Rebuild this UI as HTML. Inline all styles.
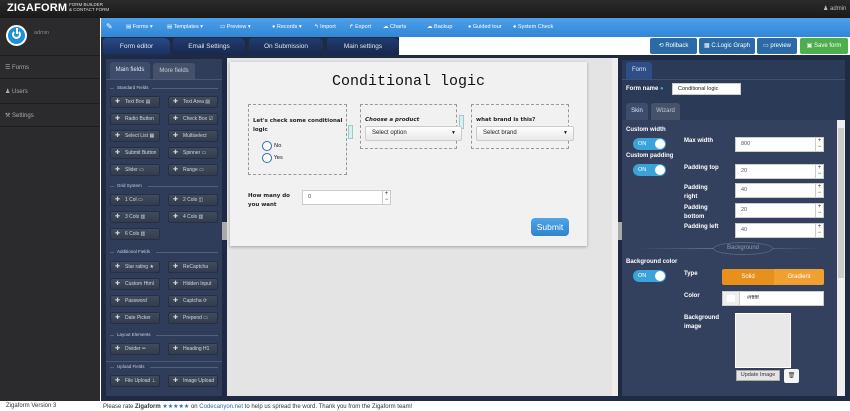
<!DOCTYPE html>
<html><head><meta charset="utf-8"><style>
*{box-sizing:border-box;margin:0;padding:0}
body{width:850px;height:411px;overflow:hidden;font-family:"Liberation Sans",sans-serif;font-size:6px;background:#fff;position:relative}
.a{position:absolute}
.top{left:0;top:0;width:850px;height:18px;background:linear-gradient(#2a2a2a,#1a1a1a)}
.side{left:0;top:18px;width:100px;height:383px;background:#2b2a2c}
.tb{left:101px;top:18px;width:749px;height:19px;background:linear-gradient(#4da0ea,#3187d6)}
.tb span{position:absolute;top:6px;color:#fff;font-size:5.5px}
.tabs{left:101px;top:37px;width:749px;height:18px;background:#fff}
.tab{position:absolute;top:1px;height:17px;background:linear-gradient(#2a4a86,#1a2f5e);color:#dfe6f2;font-size:6.5px;text-align:center;line-height:17px;border-radius:3px 6px 0 0}
.btn{position:absolute;top:38px;height:16px;color:#fff;font-size:6px;line-height:16px;text-align:center;border-radius:2px}
.main{left:101px;top:55px;width:749px;height:346px;background:#1f2a44}
.lp{left:106px;top:59px;width:116px;height:337px;background:#2f3d5a}
.fb{position:absolute;width:50px;height:12px;background:linear-gradient(#404b5e,#323c4e);border:1px solid #263042;border-radius:2px;color:#cfd6e2;font-size:5px;line-height:10px;padding-left:14px}
.fb:before{content:"✚";position:absolute;left:4px;top:0;color:#cfd6e2;font-size:6px}
.lbl{position:absolute;left:117px;color:#c8d0dd;font-size:4.5px}
.hr{position:absolute;height:1px;background:#52607a}
.cv{left:227px;top:58px;width:391px;height:338px;background:#e4e4e4}
.card{left:230px;top:62px;width:357px;height:184px;background:#f1f1f1;box-shadow:0 1px 3px rgba(0,0,0,.3)}
.dash{position:absolute;border:1px dashed #999}
.cf{font-family:"DejaVu Sans",sans-serif;font-size:5.5px;font-weight:bold;color:#222}
.sel{position:absolute;height:15px;background:linear-gradient(#fff,#e8e8e8);border:1px solid #ccc;border-radius:2px;font-size:6px;line-height:13px;padding-left:6px;color:#222}
.rp{left:622px;top:60px;width:223px;height:336px;background:#2b3a57}
.wl{position:absolute;color:#fff;font-weight:bold;font-size:6px}
.inp{position:absolute;height:15px;background:#fff;border:1px solid #ccc;font-size:5.5px;line-height:13px;padding-left:5px;color:#555}
.inp i{position:absolute;right:0;top:0;width:8px;height:13px;border-left:1px solid #ccc;font-style:normal;font-size:6px;line-height:6px;text-align:center;color:#333}
.tog{position:absolute;left:633px;width:33px;height:12px;border-radius:6px;background:#3aa3d8;color:#fff;font-size:5.5px;line-height:12px;padding-left:5px}
.tog:after{content:"";position:absolute;right:1px;top:1px;width:10px;height:10px;border-radius:5px;background:#fff}
</style></head><body>
<div class="a top"></div>
<div class="a" style="left:7px;top:2px;color:#fff;font-weight:bold;font-size:11px;letter-spacing:.2px">ZIGAFORM</div>
<div class="a" style="left:69px;top:3px;color:#ddd;font-size:4.5px;line-height:4.5px">FORM BUILDER<br>&amp; CONTACT FORM</div>
<div class="a" style="left:823px;top:5px;color:#bbb;font-size:6px">♟ admin</div>
<div class="a side"></div>
<div class="a" style="left:6px;top:25px;width:21px;height:21px;border-radius:50%;background:#1e90d8;border:2px solid #fff"></div>
<div class="a" style="left:12px;top:30px;width:9px;height:9px;border-radius:50%;border:2px solid #fff;border-top-color:transparent"></div>
<div class="a" style="left:15.5px;top:28px;width:2px;height:6px;background:#fff"></div>
<div class="a" style="left:34px;top:30px;color:#888;font-size:5.5px">admin</div>
<div class="a" style="left:0;top:55px;width:100px;height:1px;background:#1e1e1e"></div>
<div class="a" style="left:5px;top:64px;color:#aaa;font-size:6px">☰ Forms</div>
<div class="a" style="left:0;top:78px;width:100px;height:1px;background:#1e1e1e"></div>
<div class="a" style="left:5px;top:88px;color:#aaa;font-size:6px">♟ Users</div>
<div class="a" style="left:0;top:103px;width:100px;height:1px;background:#1e1e1e"></div>
<div class="a" style="left:5px;top:112px;color:#aaa;font-size:6px">⚒ Settings</div>
<div class="a" style="left:0;top:126px;width:100px;height:1px;background:#1e1e1e"></div>
<div class="a" style="left:6px;top:403px;color:#333;font-size:6px">Zigaform Version 3</div>

<div class="a tb">
<span style="left:5px;top:4px;font-size:8px">✎</span>
<span style="left:25px">▤ Forms ▾</span><span style="left:66px">▤ Templates ▾</span><span style="left:119px">▭ Preview ▾</span><span style="left:171px">● Records ▾</span><span style="left:213px">↰ Import</span><span style="left:248px">↱ Export</span><span style="left:282px">☁ Charts</span><span style="left:326px">☁ Backup</span><span style="left:367px">● Guided tour</span><span style="left:412px">● System Check</span>
</div>
<div class="a tabs">
<div class="a" style="left:0;top:0;width:298px;height:18px;background:#1f2a44"></div>
<div class="tab" style="left:2px;width:67px">Form editor</div>
<div class="tab" style="left:72px;width:72px;background:linear-gradient(#223c6e,#16284e)">Email Settings</div>
<div class="tab" style="left:148px;width:74px;background:linear-gradient(#223c6e,#16284e)">On Submission</div>
<div class="tab" style="left:226px;width:72px;background:linear-gradient(#223c6e,#16284e)">Main settings</div>
</div>
<div class="btn" style="left:650px;width:47px;background:#2b6aa6">⟲ Rollback</div>
<div class="btn" style="left:699px;width:56px;background:#2b6aa6">▦ C.Logic Graph</div>
<div class="btn" style="left:757px;width:40px;background:#2b6aa6">▭ preview</div>
<div class="btn" style="left:800px;width:48px;background:#4cae4c">▣ Save form</div>

<div class="a main"></div>
<div class="a lp"></div>
<div class="a" style="left:110px;top:62px;width:40px;height:17px;background:#3e4d6c;color:#e4e8f0;font-size:6px;line-height:17px;text-align:center;border-radius:3px 3px 0 0">Main fields</div>
<div class="a" style="left:153px;top:63px;width:42px;height:16px;background:#45516a;color:#c4ccd8;font-size:6px;line-height:16px;text-align:center;border-radius:3px 3px 0 0">More fields</div>
<div class="a" style="left:106px;top:79px;width:116px;height:1px;background:#4a5874"></div>

<div class="lbl" style="top:85px">Standard Fields</div>
<div class="fb" style="left:110px;top:96px">Text Box ▤</div><div class="fb" style="left:168px;top:96px">Text Area ▤</div>
<div class="fb" style="left:110px;top:113px">Radio Button</div><div class="fb" style="left:168px;top:113px">Check Box ☑</div>
<div class="fb" style="left:110px;top:130px">Select List ▦</div><div class="fb" style="left:168px;top:130px">Multiselect</div>
<div class="fb" style="left:110px;top:147px">Submit Button</div><div class="fb" style="left:168px;top:147px">Spinner ▭</div>
<div class="fb" style="left:110px;top:164px">Slider ▭</div><div class="fb" style="left:168px;top:164px">Range ▭</div>
<div class="lbl" style="top:183px">Grid System</div>
<div class="fb" style="left:110px;top:194px">1 Col ▭</div><div class="fb" style="left:168px;top:194px">2 Cols ◫</div>
<div class="fb" style="left:110px;top:211px">3 Cols ▥</div><div class="fb" style="left:168px;top:211px">4 Cols ▥</div>
<div class="fb" style="left:110px;top:228px">6 Cols ▥</div>
<div class="lbl" style="top:249px">Additional Fields</div>
<div class="fb" style="left:110px;top:261px">Star rating ★</div><div class="fb" style="left:168px;top:261px">ReCaptcha</div>
<div class="fb" style="left:110px;top:278px">Custom Html</div><div class="fb" style="left:168px;top:278px">Hidden Input</div>
<div class="fb" style="left:110px;top:295px">Password</div><div class="fb" style="left:168px;top:295px">Captcha ⟳</div>
<div class="fb" style="left:110px;top:312px">Date Picker</div><div class="fb" style="left:168px;top:312px">Prepend ▭</div>
<div class="lbl" style="top:332px">Layout Elements</div>
<div class="fb" style="left:110px;top:343px">Divider ═</div><div class="fb" style="left:168px;top:343px">Heading H1</div>
<div class="lbl" style="top:364px">Upload Fields</div>
<div class="fb" style="left:110px;top:375px">File Upload ⊥</div><div class="fb" style="left:168px;top:375px">Image Upload</div>
<div class="hr" style="left:110px;top:88px;width:4px"></div><div class="hr" style="left:152px;top:88px;width:66px"></div>
<div class="hr" style="left:110px;top:186px;width:4px"></div><div class="hr" style="left:148px;top:186px;width:70px"></div>
<div class="hr" style="left:110px;top:252px;width:4px"></div><div class="hr" style="left:156px;top:252px;width:62px"></div>
<div class="hr" style="left:110px;top:335px;width:4px"></div><div class="hr" style="left:156px;top:335px;width:62px"></div>
<div class="hr" style="left:110px;top:367px;width:4px"></div><div class="hr" style="left:150px;top:367px;width:68px"></div>
<div class="a" style="left:106px;top:361px;width:116px;height:1px;background:#4a5874"></div>

<div class="a cv"></div>
<div class="a" style="left:612px;top:58px;width:6px;height:338px;background:#eee"></div>
<div class="a" style="left:222px;top:222px;width:5px;height:18px;background:#aaa"></div>
<div class="a" style="left:618px;top:222px;width:4px;height:18px;background:#aaa"></div>
<div class="a card"></div>
<div class="a" style="left:230px;top:73px;width:357px;text-align:center;font-family:'Liberation Mono',monospace;font-size:15px;color:#111">Conditional logic</div>
<div class="dash" style="left:248px;top:104px;width:99px;height:71px"></div>
<div class="dash" style="left:360px;top:104px;width:97px;height:45px"></div>
<div class="dash" style="left:471px;top:104px;width:98px;height:45px"></div>
<div class="a cf" style="left:253px;top:117px;width:92px;line-height:9px">Let's check some conditional logic</div>
<div class="a" style="left:262px;top:141px;width:10px;height:10px;border-radius:50%;border:1px solid #2a6ab8;background:#fff"></div>
<div class="a cf" style="left:274px;top:143px;font-weight:normal">No</div>
<div class="a" style="left:262px;top:153px;width:10px;height:10px;border-radius:50%;border:1px solid #2a6ab8;background:#fff"></div>
<div class="a cf" style="left:274px;top:155px;font-weight:normal">Yes</div>
<div class="a" style="left:348px;top:125px;width:5px;height:14px;border:1px solid #9cc;background:#dee"></div>
<div class="a" style="left:459px;top:115px;width:5px;height:14px;border:1px solid #9cc;background:#dee"></div>
<div class="a cf" style="left:365px;top:117px;font-style:italic">Choose a product</div>
<div class="sel" style="left:365px;top:126px;width:97px">Select option<span style="position:absolute;right:5px;font-size:5px">▼</span></div>
<div class="a cf" style="left:476px;top:117px">what brand is this?</div>
<div class="sel" style="left:476px;top:126px;width:98px">Select brand<span style="position:absolute;right:5px;font-size:5px">▼</span></div>
<div class="a cf" style="left:248px;top:192px;width:55px;line-height:9px">How many do you want</div>
<div class="inp" style="left:302px;top:190px;width:89px">0<i>+<br>−</i></div>
<div class="a" style="left:531px;top:218px;width:38px;height:18px;border-radius:4px;background:linear-gradient(#4fa6e6,#2f82cc);color:#fff;font-size:8.5px;line-height:18px;text-align:center">Submit</div>

<div class="a rp"></div>
<div class="a" style="left:626px;top:62px;width:26px;height:17px;background:#2f4d86;color:#dfe6f2;font-size:6px;line-height:17px;text-align:center;border-radius:3px 3px 0 0">Form</div>
<div class="a" style="left:622px;top:79px;width:223px;height:1px;background:#3f5070"></div>
<div class="wl" style="left:626px;top:86px">Form name <span style="color:#3aa3d8">●</span></div>
<div class="inp" style="left:672px;top:83px;width:69px;height:12px;line-height:10px;color:#222">Conditional logic</div>
<div class="a" style="left:626px;top:103px;width:22px;height:17px;background:#3e4d6c;color:#dfe6f2;font-size:6px;line-height:17px;text-align:center;border-radius:3px 3px 0 0">Skin</div>
<div class="a" style="left:651px;top:103px;width:29px;height:17px;background:#46526a;color:#bfc7d3;font-size:6px;line-height:17px;text-align:center;border-radius:3px 3px 0 0">Wizard</div>
<div class="a" style="left:622px;top:120px;width:215px;height:276px;background:#33415e"></div>
<div class="a" style="left:837px;top:120px;width:8px;height:276px;background:#eee"></div>
<div class="a" style="left:838px;top:128px;width:6px;height:150px;background:#ccc"></div>
<div class="wl" style="left:626px;top:127px">Custom width</div>
<div class="tog" style="top:138px">ON</div>
<div class="wl" style="left:626px;top:153px">Custom padding</div>
<div class="tog" style="top:164px">ON</div>
<div class="wl" style="left:684px;top:138px">Max width</div>
<div class="inp" style="left:735px;top:137px;width:89px">800<i>+<br>−</i></div>
<div class="wl" style="left:684px;top:165px">Padding top</div>
<div class="inp" style="left:735px;top:164px;width:89px">20<i>+<br>−</i></div>
<div class="wl" style="left:684px;top:184px;line-height:9px">Padding<br>right</div>
<div class="inp" style="left:735px;top:183px;width:89px">40<i>+<br>−</i></div>
<div class="wl" style="left:684px;top:204px;line-height:9px">Padding<br>bottom</div>
<div class="inp" style="left:735px;top:203px;width:89px">20<i>+<br>−</i></div>
<div class="wl" style="left:684px;top:224px">Padding left</div>
<div class="inp" style="left:735px;top:223px;width:89px">40<i>+<br>−</i></div>
<div class="a" style="left:640px;top:248px;width:180px;height:1px;background:linear-gradient(90deg,transparent,#6a7a98,transparent)"></div>
<div class="a" style="left:713px;top:242px;width:60px;height:13px;border-radius:50%;border:1px solid #55657f;background:#33415e;color:#8e9ab0;font-size:6px;line-height:11px;text-align:center">Background</div>
<div class="wl" style="left:626px;top:259px">Background color</div>
<div class="tog" style="top:270px">ON</div>
<div class="wl" style="left:684px;top:271px">Type</div>
<div class="a" style="left:722px;top:269px;width:52px;height:16px;background:#e8901c;color:#fff;font-size:6px;line-height:16px;text-align:center;border-radius:2px 0 0 2px">Solid</div>
<div class="a" style="left:774px;top:269px;width:50px;height:16px;background:#f0a030;color:#fff;font-size:6px;line-height:16px;text-align:center;border-radius:0 2px 2px 0">Gradient</div>
<div class="wl" style="left:684px;top:293px">Color</div>
<div class="inp" style="left:722px;top:291px;width:102px;padding-left:24px;color:#333">#ffffff</div>
<div class="a" style="left:723px;top:292px;width:17px;height:13px;background:#eee;border-right:1px solid #ccc"></div>
<div class="a" style="left:727px;top:295px;width:8px;height:7px;background:#fff"></div>
<div class="wl" style="left:684px;top:314px;line-height:9px">Background<br>image</div>
<div class="a" style="left:735px;top:313px;width:56px;height:55px;background:#e8e8e8;border:1px solid #fff"></div>
<div class="a" style="left:736px;top:370px;width:44px;height:11px;background:#e4e4e4;border:1px solid #aaa;font-size:5.5px;line-height:9px;text-align:center;color:#333">Update Image</div>
<div class="a" style="left:784px;top:369px;width:15px;height:14px;background:#f4f4f4;border-radius:2px;font-size:6px;line-height:14px;text-align:center;color:#333">🗑</div>

<div class="a" style="left:103px;top:403px;color:#333;font-size:6px">Please rate <b>Zigaform</b> <span style="color:#2a6ab8">★★★★★</span> on <span style="color:#2a6ab8">Codecanyon.net</span> to help us spread the word. Thank you from the Zigaform team!</div>
</body></html>
